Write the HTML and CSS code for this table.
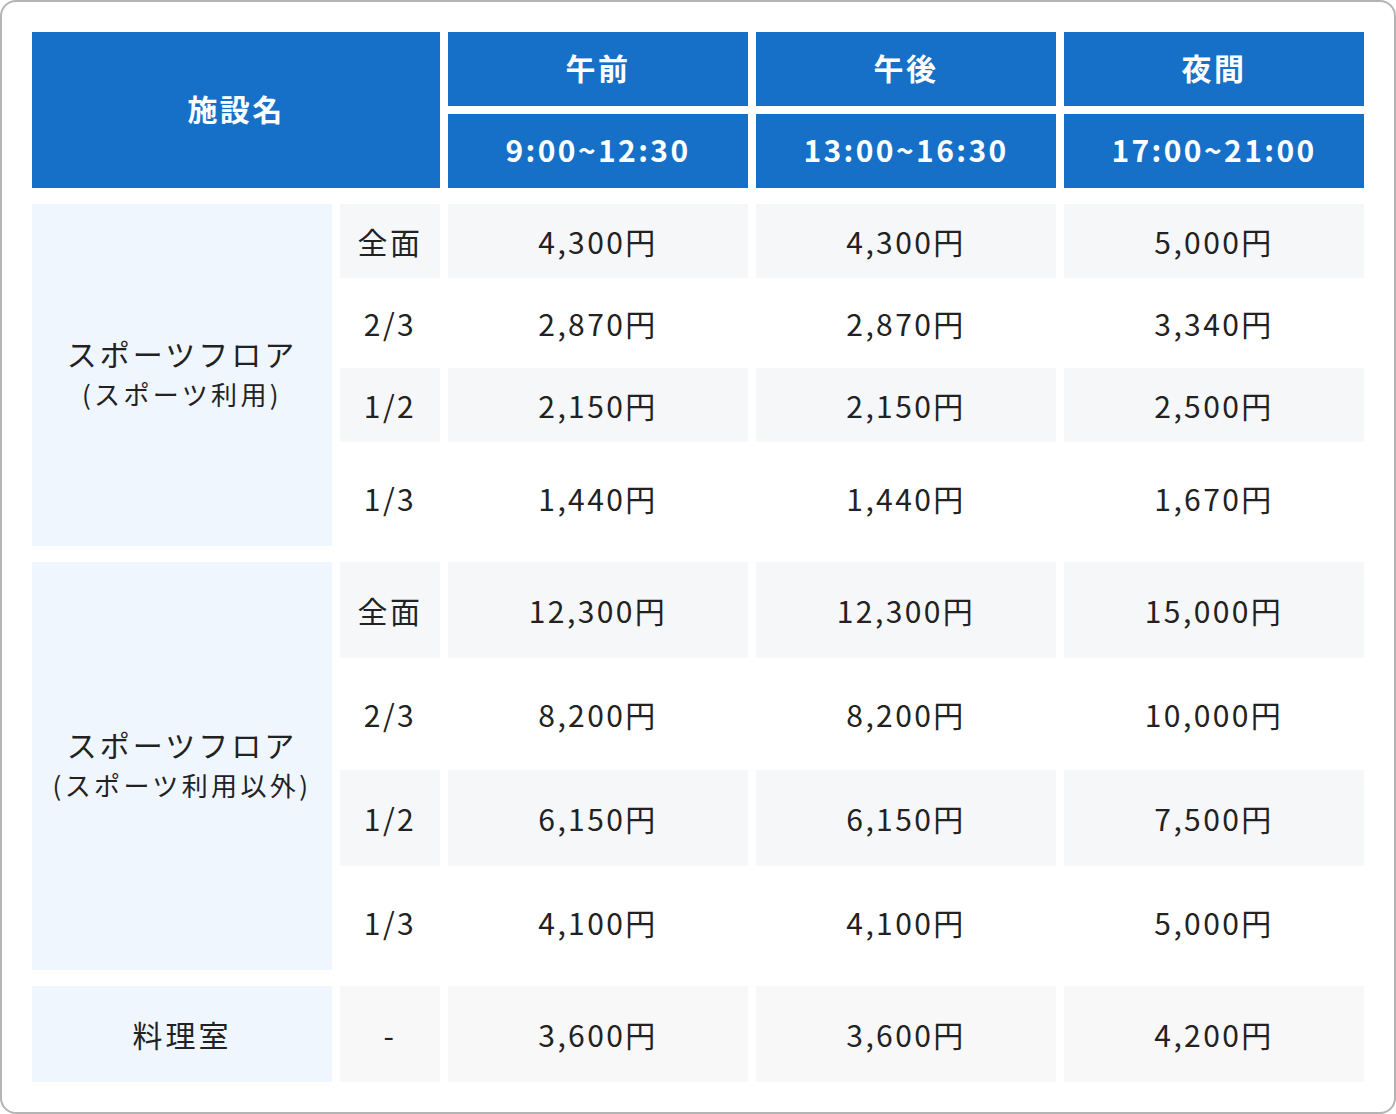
FILE: index.html
```html
<!DOCTYPE html>
<html lang="ja">
<head>
<meta charset="utf-8">
<title>料金表</title>
<link rel="stylesheet" href="styles.css">
</head>
<body>
<div class="frame">
  <div class="table">
    <div class="cell head head-name">施設名</div>
    <div class="cell head">午前</div>
    <div class="cell head">午後</div>
    <div class="cell head">夜間</div>
    <div class="cell head">9:00~12:30</div>
    <div class="cell head">13:00~16:30</div>
    <div class="cell head">17:00~21:00</div>
    <div class="spacer"></div>

    <div class="cell group g4"><span class="main">スポーツフロア</span><span class="sub">(スポーツ利用)</span></div>
    <div class="cell gray">全面</div><div class="cell gray">4,300円</div><div class="cell gray">4,300円</div><div class="cell gray">5,000円</div>
    <div class="cell">2/3</div><div class="cell">2,870円</div><div class="cell">2,870円</div><div class="cell">3,340円</div>
    <div class="cell gray">1/2</div><div class="cell gray">2,150円</div><div class="cell gray">2,150円</div><div class="cell gray">2,500円</div>
    <div class="cell">1/3</div><div class="cell">1,440円</div><div class="cell">1,440円</div><div class="cell">1,670円</div>
    <div class="spacer"></div>

    <div class="cell group g4"><span class="main">スポーツフロア</span><span class="sub">(スポーツ利用以外)</span></div>
    <div class="cell gray">全面</div><div class="cell gray">12,300円</div><div class="cell gray">12,300円</div><div class="cell gray">15,000円</div>
    <div class="cell">2/3</div><div class="cell">8,200円</div><div class="cell">8,200円</div><div class="cell">10,000円</div>
    <div class="cell gray">1/2</div><div class="cell gray">6,150円</div><div class="cell gray">6,150円</div><div class="cell gray">7,500円</div>
    <div class="cell">1/3</div><div class="cell">4,100円</div><div class="cell">4,100円</div><div class="cell">5,000円</div>
    <div class="spacer"></div>

    <div class="cell group"><span class="main">料理室</span></div>
    <div class="cell gray2">-</div><div class="cell gray2">3,600円</div><div class="cell gray2">3,600円</div><div class="cell gray2">4,200円</div>
  </div>
</div>
</body>
</html>
```
FILE: styles.css
```css
html, body {
  margin: 0;
  padding: 0;
  background: #ffffff;
}
body {
  font-family: "Noto Sans CJK JP", "Noto Sans", sans-serif;
  color: #222222;
}
.frame {
  box-sizing: border-box;
  width: 1396px;
  height: 1114px;
  border: 2px solid #b4b4b4;
  border-radius: 16px;
  padding: 30px;
  background: #ffffff;
}
.table {
  display: grid;
  grid-template-columns: 300px 100px 300px 300px 300px;
  grid-template-rows: 74px 74px 0 74px 74px 74px 96px 0 96px 96px 96px 96px 0 96px;
  gap: 8px;
}
.cell {
  box-sizing: border-box;
  display: flex;
  align-items: center;
  justify-content: center;
  font-size: 30px;
  letter-spacing: 0.08em;
  line-height: 1;
  white-space: nowrap;
  padding-bottom: 1px;
}
.head {
  background: #1670c8;
  color: #ffffff;
  font-weight: 700;
  letter-spacing: 0.08em;
  padding-bottom: 4px;
}
.head-name {
  grid-column: 1 / 3;
  grid-row: 1 / 3;
}
.spacer {
  grid-column: 1 / -1;
  height: 0;
}
.group {
  grid-column: 1;
  background: #eff6fe;
  flex-direction: column;
  gap: 13px;
}
.g4 {
  grid-row: span 4;
  padding-bottom: 5px;
}
.group .main {
  font-size: 30px;
  letter-spacing: 0.1em;
}
.group .sub {
  font-size: 26px;
  letter-spacing: 0.13em;
}
.gray {
  background: #f6f7f9;
}
.gray2 {
  background: #f8f8f8;
}
```
